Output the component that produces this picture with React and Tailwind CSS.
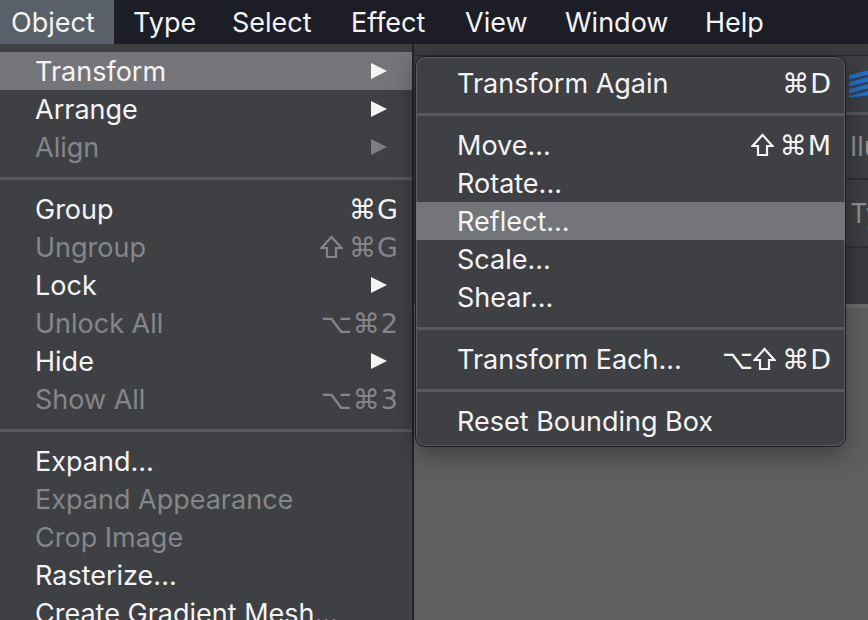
import React from 'react'

const menuBar = [
    { label: 'Object', w: 'w-[114px] pl-[11px] bg-[#5a6069]' },
    { label: 'Type', w: 'w-[99px] pl-[19px]' },
    { label: 'Select', w: 'w-[119px] pl-[19px]' },
    { label: 'Effect', w: 'w-[114px] pl-[19px]' },
    { label: 'View', w: 'w-[100px] pl-[19px]' },
    { label: 'Window', w: 'w-[140px] pl-[19px]' },
    { label: 'Help', w: 'pl-[19px]' },
]

const mainItems = [
    { label: 'Transform', sub: true, active: true },
    { label: 'Arrange', sub: true },
    { label: 'Align', sub: true, off: true },
    { sep: true },
    { label: 'Group', key: '⌘G' },
    { label: 'Ungroup', key: 'S⌘G', off: true },
    { label: 'Lock', sub: true },
    { label: 'Unlock All', key: '⌥⌘2', off: true },
    { label: 'Hide', sub: true },
    { label: 'Show All', key: '⌥⌘3', off: true },
    { sep: true },
    { label: 'Expand...' },
    { label: 'Expand Appearance', off: true },
    { label: 'Crop Image', off: true },
    { label: 'Rasterize...' },
    { label: 'Create Gradient Mesh...' },
]

const subItems = [
    { label: 'Transform Again', key: '⌘D' },
    { sep: true },
    { label: 'Move...', key: 'S⌘M' },
    { label: 'Rotate...' },
    { label: 'Reflect...', active: true },
    { label: 'Scale...' },
    { label: 'Shear...' },
    { sep: true },
    { label: 'Transform Each...', key: '⌥S⌘D' },
    { sep: true },
    { label: 'Reset Bounding Box' },
]

function Arrow({ off }) {
    return (
        <svg width="18" height="18" viewBox="0 0 18 18" className="mr-[10px]">
            <polygon points="1,1 17,9 1,17" fill={off ? '#7c7d80' : '#f4f4f4'} />
        </svg>
    )
}

// shift key drawn as outlined up arrow
function Shift({ color }) {
    return (
        <svg width="23" height="24" viewBox="0 0 23 24" className="mr-[5px]">
            <polygon points="11.5,2 21.5,13 16,13 16,22 7,22 7,13 1.5,13" fill="none" stroke={color} strokeWidth="2.2" strokeLinejoin="miter" />
        </svg>
    )
}

function Keys({ keys, color }) {
    return (
        <span className="flex items-center" style={{ fontFamily: '"DejaVu Sans", Inter, sans-serif' }}>
            {keys.split('').map((k, i) =>
                k === 'S' ? <Shift key={i} color={color} /> : <span key={i} className="ml-[1px]">{k}</span>
            )}
        </span>
    )
}

function Row({ item, padLeft }) {
    if (item.sep) {
        return (
            <div className="h-[24px] flex items-center">
                <div className="h-[3px] w-full bg-[#58595c]"></div>
            </div>
        )
    }
    const color = item.off ? '#85868a' : '#f4f4f5'
    const text = item.off ? 'text-[#85868a]' : 'text-[#f4f4f5]'
    const bg = item.active ? 'bg-[#747578]' : ''
    return (
        <div className={`h-[38px] flex items-center justify-between ${padLeft} pr-[14px] ${bg} ${text}`}>
            <span>{item.label}</span>
            {item.sub ? <Arrow off={item.off} /> : item.key ? <Keys keys={item.key} color={color} /> : null}
        </div>
    )
}

export default function App() {
    return (
        <div className="relative w-[868px] h-[620px] overflow-hidden bg-[#5f5f5f] text-[27px] leading-none" style={{ fontFamily: 'Inter, "Noto Sans", sans-serif' }}>
            {/* menu bar */}
            <div className="h-[44px] bg-[#1c1d26] flex items-stretch text-[#f4f4f5]">
                {menuBar.map(m => (
                    <div key={m.label} className={`flex items-center ${m.w}`}>
                        {m.label}
                    </div>
                ))}
            </div>

            {/* app behind the menus */}
            <div className="ml-[413px] flex flex-col">
                <div className="h-[12px] bg-[#3a3b3e] border-b border-[#2a2b2e]"></div>
                <div className="h-[248px] bg-[#3d3e41] flex flex-col items-end">
                    <div className="h-[59px] w-[22px] flex items-center overflow-hidden border-b-[3px] border-[#55565a]">
                        <svg width="22" height="32" viewBox="0 0 22 32" className="ml-[3px]">
                            <g fill="#1e6fd1">
                                <polygon points="0,6 22,0 22,5 0,11" />
                                <polygon points="0,14 22,8 22,13 0,19" />
                                <polygon points="0,22 22,16 22,21 0,27" />
                                <polygon points="0,30 22,24 22,29 0,32" />
                            </g>
                        </svg>
                    </div>
                    <div className="h-[65px] w-[22px] flex items-center overflow-hidden whitespace-nowrap text-[#8e8f92] border-b-[2px] border-[#2e2f32] pl-[4px]">Ilu</div>
                    <div className="h-[68px] w-[22px] flex items-center overflow-hidden whitespace-nowrap text-[#8e8f92] border-b-[2px] border-[#2e2f32] pl-[4px]">Ty</div>
                    <div className="flex-1 w-[22px] bg-[#38393c]"></div>
                </div>
                <div className="h-[4px] bg-[#6a6a6a]"></div>
            </div>

            {/* Object menu */}
            <div className="absolute left-0 top-[44px] w-[414px] h-[600px] bg-[#3f4043] border-r-2 border-[#232427] pt-[8px]">
                {mainItems.map((item, i) => (
                    <Row key={i} item={item} padLeft="pl-[35px]" />
                ))}
            </div>

            {/* Transform submenu */}
            <div className="absolute left-[415px] top-[56px] w-[431px] h-[391px] rounded-[10px] bg-[#3f4043] border border-[#1d1e21] shadow-[inset_0_0_0_1px_#5b5c5f,0_8px_24px_rgba(0,0,0,0.35)] py-[7px] pr-[-2px] overflow-hidden">
                {subItems.map((item, i) => (
                    <Row key={i} item={item} padLeft="pl-[41px]" />
                ))}
            </div>
        </div>
    )
}
